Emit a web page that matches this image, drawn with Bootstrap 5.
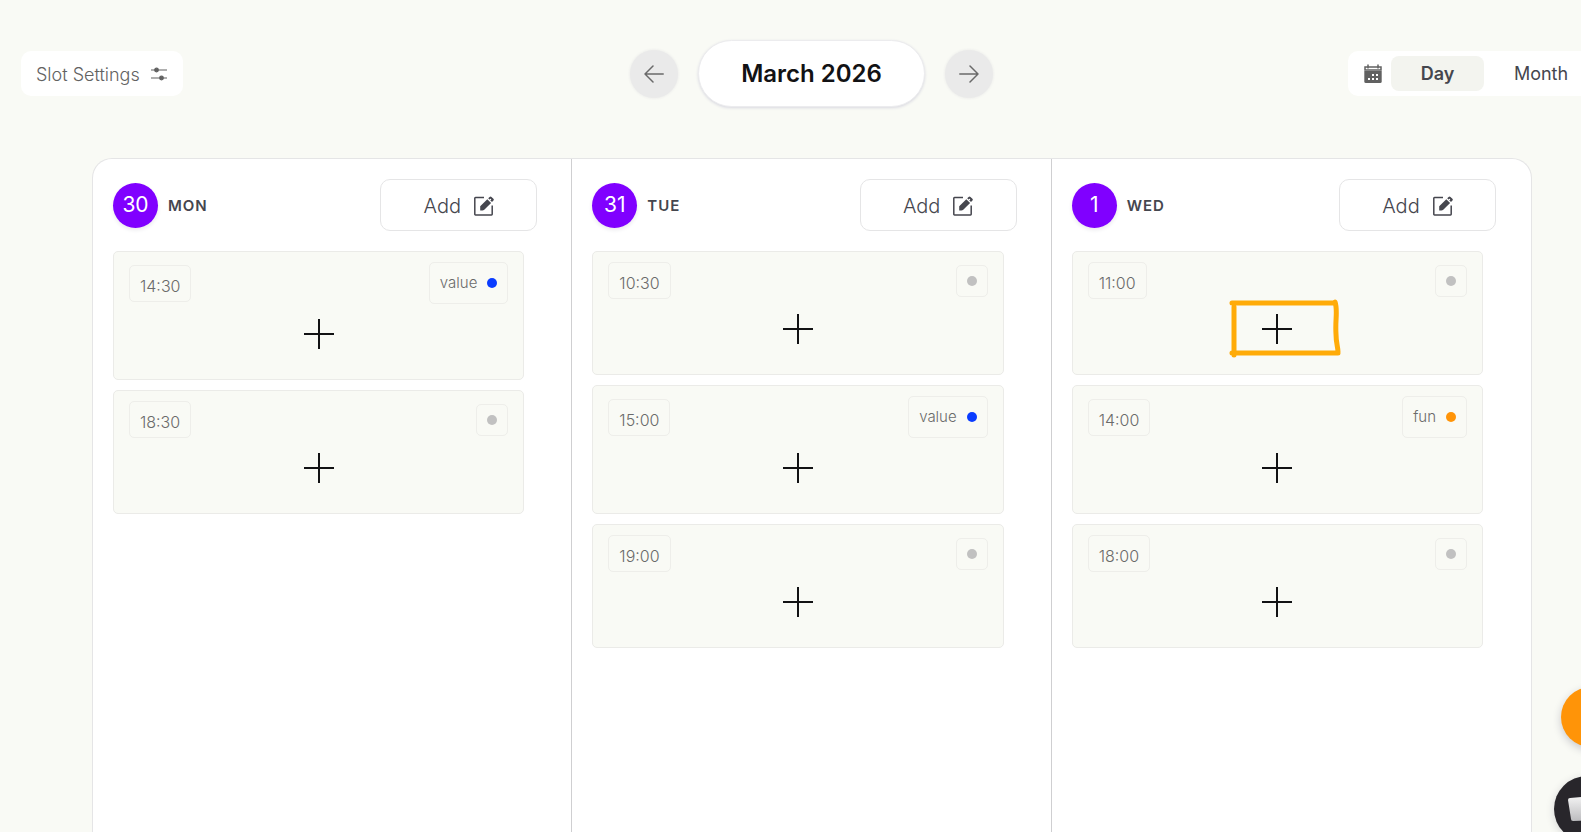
<!DOCTYPE html>
<html lang="en">
<head>
<meta charset="utf-8">
<meta name="viewport" content="width=device-width, initial-scale=1">
<title>Slot planner</title>
<link href="https://cdn.jsdelivr.net/npm/bootstrap@5.3.0/dist/css/bootstrap.min.css" rel="stylesheet">
<style>
  body { background: #f9faf5; font-family: Inter, "Liberation Sans", sans-serif; color: #45464e; overflow: hidden; }
  .shell { margin-left: 21px; width: 100%; }
  .topbar { display: grid; grid-template-columns: 1fr auto 1fr; align-items: center; padding-top: 40px; margin-bottom: 51px; }
  .slot-btn { height: 45px; border: 0; border-radius: 10px; background: #fff; color: #626262; font-size: 18px; font-weight: 300; padding: 1px 16px 0 15px; gap: 11px; }
  .pager { gap: 20px; }
  .round-btn { width: 48px; height: 48px; border: 0; border-radius: 50%; background: #eaeaea; box-shadow: 0 0 3px #e6e6e6; padding: 0; }
  .round-btn svg { display: block; margin: 0 auto; }
  .period { width: 227px; height: 67px; border-radius: 34px; background: #fff; border: 1px solid #ececee; box-shadow: 0 1px 3px #d8d8e0; color: #121214; font-size: 24px; font-weight: 600; }
  .views { height: 45px; border-radius: 10px; background: #fff; padding: 0 8px 0 15px; gap: 4px; font-size: 18px; }
  .view-tab { height: 35px; border: 0; border-radius: 8px; background: #fff; color: #45464e; font-weight: 400; width: 106px; padding: 0; }
  .view-tab.current { background: #f3f4ef; font-weight: 600; width: 93px; }
  .board { margin: 0 70px 0 71px; background: #fff; border: 1px solid #e5e5e6; border-bottom: 0; border-radius: 20px 20px 0 0; }
  .day { width: calc(100% / 3); padding: 20px 34px 0 20px; border-right: 1px solid #cfcfd1; }
  .day:last-child { border-right-color: transparent; }
  .day-num { width: 45px; height: 45px; border-radius: 50%; background: #8000ff; color: #fff; font-size: 21px; font-weight: 400; box-shadow: 0 2px 4px #e9e9ec; }
  .day-name { font-size: 15px; font-weight: 600; letter-spacing: 1px; margin: 0 0 0 10px; padding-top: 2px; }
  .add-btn { width: 157px; height: 52px; border: 1px solid #e5e5e6; border-radius: 10px; background: #fff; color: #45464e; font-size: 20px; font-weight: 300; gap: 13px; padding: 1px 0 0; }
  .slots { margin: 20px 13px 0 0; gap: 10px; }
  .slot { border: 1px solid #ebebe8; border-radius: 5px; background: #f9faf5; padding: 10px 15px 30px; }
  .chip { border: 1px solid #eeeeea; border-radius: 5px; color: #6a6a6a; font-size: 15px; font-weight: 300; }
  .hour { height: 37px; padding: 5px 10px 0; font-size: 16px; }
  .tag { height: 42px; padding: 0 10px; gap: 10px; }
  .tag.blank { height: 32px; }
  .dot { width: 10px; height: 10px; border-radius: 50%; background: #c1c1c1; }
  .dot.blue { background: #0a3cff; }
  .dot.orange { background: #ff9408; }
  .plus { display: block; border: 0; background: none; padding: 0; width: 30px; height: 30px; margin: 15px auto 0; }
  .plus svg { display: block; }
  .mark-up { position: absolute; left: calc(50% - 49px); top: 43px; pointer-events: none; }
  .fab { position: fixed; border: 0; border-radius: 50%; padding: 0; }
  .fab-new { width: 60px; height: 60px; right: -40px; bottom: 85px; background: #ff9408; box-shadow: 0 3px 8px #c9c9cc; }
  .fab-chat { width: 66px; height: 66px; right: -39px; bottom: -10px; background: #28262b; box-shadow: 0 2px 8px #d5d5d5; }
</style>
</head>
<body>
<svg class="d-none" aria-hidden="true">
  <symbol id="i-edit" viewBox="0 0 20 20">
    <path d="M10 1.5H1.500a.7.7 0 0 0-.7.7v16a.7.7 0 0 0 .7.7h16a.7.7 0 0 0 .7-.7V9.500" fill="none" stroke="#45464e" stroke-width="1.5"/>
    <path d="M6.200 14.500V10.300L13.300 3.200l3.800 3.800L10 14.100l-1.500.4zM14.200 2.300 15.600.9a1.300 1.300 0 0 1 1.900 0l1.900 1.900a1.300 1.300 0 0 1 0 1.800L18 6.100z" fill="#45464e"/>
    <circle cx="16.400" cy="3.500" r=".8" fill="#fff"/>
  </symbol>
  <symbol id="i-plus" viewBox="0 0 30 30"><path d="M15 0v30M0 15h30" stroke="#121214" stroke-width="2"/></symbol>
</svg>

<div class="shell d-flex flex-column vh-100">
  <header class="topbar">
    <div>
      <button class="slot-btn d-inline-flex align-items-center" type="button">Slot Settings
        <svg width="16" height="14" viewBox="0 0 16 14" stroke="#616161" stroke-width="1.2" fill="#616161" aria-hidden="true"><path d="M0 3h16M0 11h16"/><circle cx="5.500" cy="3" r="1.800"/><circle cx="10.500" cy="11" r="1.800"/></svg>
      </button>
    </div>
    <div class="pager d-flex align-items-center">
      <button class="round-btn" type="button" aria-label="Previous"><svg width="20" height="18" viewBox="0 0 20 18" fill="none" stroke="#6a6a6a" stroke-width="1.5" stroke-linecap="round" stroke-linejoin="round"><path d="M19.200 9H1M9 1 1 9l8 8"/></svg></button>
      <button class="period" type="button">March 2026</button>
      <button class="round-btn" type="button" aria-label="Next"><svg width="20" height="18" viewBox="0 0 20 18" fill="none" stroke="#6a6a6a" stroke-width="1.5" stroke-linecap="round" stroke-linejoin="round"><path d="M.8 9H19M11 1l8 8-8 8"/></svg></button>
    </div>
    <div class="d-flex justify-content-end">
      <div class="views d-flex align-items-center">
        <svg class="me-1" width="20" height="20" viewBox="0 0 20 20" aria-hidden="true"><path d="M2 3h16v3H2z" fill="none" stroke="#616161" stroke-width="1.5"/><path d="M5 .5v4M15 .5v4" stroke="#616161" stroke-width="1.5"/><path d="M1.300 7h17.400v10.500a1.500 1.500 0 0 1-1.500 1.500H2.800a1.500 1.500 0 0 1-1.500-1.500z" fill="#616161"/><path d="M9 10h2v2H9zM13 10h2v2h-2zM5 14h2v2H5zM9 14h2v2H9zM13 14h2v2h-2z" fill="#fff"/></svg>
        <button class="view-tab current" type="button">Day</button>
        <button class="view-tab" type="button">Month</button>
      </div>
    </div>
  </header>

  <main class="board d-flex flex-grow-1">
    <section class="day">
      <div class="d-flex align-items-center">
        <span class="day-num d-flex align-items-center justify-content-center">30</span><h2 class="day-name">MON</h2>
        <button class="add-btn ms-auto d-flex align-items-center justify-content-center" type="button">Add <svg width="20" height="20" aria-hidden="true"><use href="#i-edit"/></svg></button>
      </div>
      <div class="slots d-flex flex-column">
        <article class="slot">
          <div class="d-flex align-items-center justify-content-between"><time class="chip hour d-flex align-items-center">14:30</time><span class="chip tag d-flex align-items-center">value<i class="dot blue"></i></span></div>
          <button class="plus" type="button" aria-label="Add post"><svg width="30" height="30"><use href="#i-plus"/></svg></button>
        </article>
        <article class="slot">
          <div class="d-flex align-items-center justify-content-between"><time class="chip hour d-flex align-items-center">18:30</time><span class="chip tag blank d-flex align-items-center"><i class="dot"></i></span></div>
          <button class="plus" type="button" aria-label="Add post"><svg width="30" height="30"><use href="#i-plus"/></svg></button>
        </article>
      </div>
    </section>

    <section class="day">
      <div class="d-flex align-items-center">
        <span class="day-num d-flex align-items-center justify-content-center">31</span><h2 class="day-name">TUE</h2>
        <button class="add-btn ms-auto d-flex align-items-center justify-content-center" type="button">Add <svg width="20" height="20" aria-hidden="true"><use href="#i-edit"/></svg></button>
      </div>
      <div class="slots d-flex flex-column">
        <article class="slot">
          <div class="d-flex align-items-center justify-content-between"><time class="chip hour d-flex align-items-center">10:30</time><span class="chip tag blank d-flex align-items-center"><i class="dot"></i></span></div>
          <button class="plus" type="button" aria-label="Add post"><svg width="30" height="30"><use href="#i-plus"/></svg></button>
        </article>
        <article class="slot">
          <div class="d-flex align-items-center justify-content-between"><time class="chip hour d-flex align-items-center">15:00</time><span class="chip tag d-flex align-items-center">value<i class="dot blue"></i></span></div>
          <button class="plus" type="button" aria-label="Add post"><svg width="30" height="30"><use href="#i-plus"/></svg></button>
        </article>
        <article class="slot">
          <div class="d-flex align-items-center justify-content-between"><time class="chip hour d-flex align-items-center">19:00</time><span class="chip tag blank d-flex align-items-center"><i class="dot"></i></span></div>
          <button class="plus" type="button" aria-label="Add post"><svg width="30" height="30"><use href="#i-plus"/></svg></button>
        </article>
      </div>
    </section>

    <section class="day">
      <div class="d-flex align-items-center">
        <span class="day-num d-flex align-items-center justify-content-center">1</span><h2 class="day-name">WED</h2>
        <button class="add-btn ms-auto d-flex align-items-center justify-content-center" type="button">Add <svg width="20" height="20" aria-hidden="true"><use href="#i-edit"/></svg></button>
      </div>
      <div class="slots d-flex flex-column">
        <article class="slot position-relative">
          <div class="d-flex align-items-center justify-content-between"><time class="chip hour d-flex align-items-center">11:00</time><span class="chip tag blank d-flex align-items-center"><i class="dot"></i></span></div>
          <button class="plus" type="button" aria-label="Add post"><svg width="30" height="30"><use href="#i-plus"/></svg></button>
          <svg class="mark-up" width="114" height="66" viewBox="0 0 114 66" fill="none" stroke="#ffab08" stroke-width="5" stroke-linecap="round" stroke-linejoin="round" aria-hidden="true"><path d="M4 8H106M6 12V60M4 58H110M107 7c3 8 0 18 1 32 0 9 2 13 2 18"/></svg>
        </article>
        <article class="slot">
          <div class="d-flex align-items-center justify-content-between"><time class="chip hour d-flex align-items-center">14:00</time><span class="chip tag d-flex align-items-center">fun<i class="dot orange"></i></span></div>
          <button class="plus" type="button" aria-label="Add post"><svg width="30" height="30"><use href="#i-plus"/></svg></button>
        </article>
        <article class="slot">
          <div class="d-flex align-items-center justify-content-between"><time class="chip hour d-flex align-items-center">18:00</time><span class="chip tag blank d-flex align-items-center"><i class="dot"></i></span></div>
          <button class="plus" type="button" aria-label="Add post"><svg width="30" height="30"><use href="#i-plus"/></svg></button>
        </article>
      </div>
    </section>
  </main>
</div>

<button class="fab fab-new" type="button" aria-label="New"></button>
<button class="fab fab-chat" type="button" aria-label="Chat"><svg class="d-block" width="66" height="66" viewBox="0 0 66 66" aria-hidden="true"><defs><linearGradient id="g" x1="0" y1="0" x2="0" y2="1"><stop offset="0" stop-color="#f6f6f6"/><stop offset="1" stop-color="#bcbcbf"/></linearGradient></defs><path d="M16 22 50 19a2 2 0 0 1 2 2l-2 21a2 2 0 0 1-2 2l-29 1a2 2 0 0 1-2-2L14 24a2 2 0 0 1 2-2z" fill="url(#g)"/></svg></button>
<script src="https://cdn.jsdelivr.net/npm/bootstrap@5.3.0/dist/js/bootstrap.bundle.min.js"></script>
</body>
</html>
